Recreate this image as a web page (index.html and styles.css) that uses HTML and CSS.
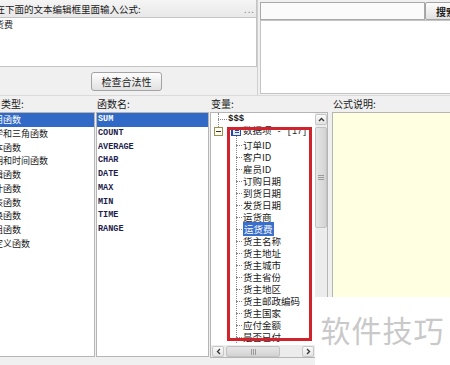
FILE: index.html
```html
<!DOCTYPE html>
<html lang="zh-CN">
<head>
    <meta charset="UTF-8">
    <title>公式编辑器</title>
    <link rel="stylesheet" href="styles.css">
</head>
<body>
    <!-- formula input + search -->
    <div class="top">
        <div class="editor">
            <div class="editor-head">
                <span class="editor-title">请在下面的文本编辑框里面输入公式:</span>
                <span class="more">...</span>
            </div>
            <div class="editor-text">运货费</div>
            <div class="editor-foot">
                <button class="btn btn-check">检查合法性</button>
            </div>
        </div>
        <div class="search">
            <div class="search-bar">
                <input class="search-input" type="text">
                <button class="btn search-btn">搜索</button>
            </div>
            <div class="search-result"></div>
        </div>
    </div>

    <!-- function picker -->
    <div class="bottom">
        <div class="col col-type">
            <div class="col-label">类型:</div>
            <ul class="list type-list">
                <li class="sel">常用函数</li>
                <li>数学和三角函数</li>
                <li>文本函数</li>
                <li>日期和时间函数</li>
                <li>逻辑函数</li>
                <li>统计函数</li>
                <li>报表函数</li>
                <li>转换函数</li>
                <li>数组函数</li>
                <li>自定义函数</li>
            </ul>
        </div>

        <div class="col col-func">
            <div class="col-label">函数名:</div>
            <ul class="list func-list">
                <li class="sel">SUM</li>
                <li>COUNT</li>
                <li>AVERAGE</li>
                <li>CHAR</li>
                <li>DATE</li>
                <li>MAX</li>
                <li>MIN</li>
                <li>TIME</li>
                <li>RANGE</li>
            </ul>
        </div>

        <div class="col col-var">
            <div class="col-label">变量:</div>
            <div class="tree-box">
                <div class="tree">
                    <div class="node leaf-top">$$$</div>
                    <div class="node group">
                        <svg class="toggle" width="9" height="9" viewBox="0 0 9 9"><rect x=".5" y=".5" width="8" height="8" fill="#fffdf0" stroke="#9c8f4f"/><path d="M2 4.5h5" stroke="#333"/></svg>
                        <svg class="node-icon" width="10" height="9" viewBox="0 0 10 9"><rect x=".5" y=".5" width="9" height="8" fill="#e4ebfb" stroke="#2b49a8"/><path d="M1 1v7" stroke="#2b49a8" stroke-width="2"/><path d="M4 3.5h4M4 5.5h4" stroke="#2b49a8"/></svg>
                        <span class="group-name">数据项<span class="mono"> - [17]</span></span>
                    </div>
                    <ul class="children">
                        <li>订单ID</li>
                        <li>客户ID</li>
                        <li>雇员ID</li>
                        <li>订购日期</li>
                        <li>到货日期</li>
                        <li>发货日期</li>
                        <li>运货商</li>
                        <li class="sel"><span>运货费</span></li>
                        <li>货主名称</li>
                        <li>货主地址</li>
                        <li>货主城市</li>
                        <li>货主省份</li>
                        <li>货主地区</li>
                        <li>货主邮政编码</li>
                        <li>货主国家</li>
                        <li>应付金额</li>
                        <li>是否已付</li>
                    </ul>
                </div>
                <div class="vscroll">
                    <div class="sb-btn">
                        <svg width="7" height="5" viewBox="0 0 7 5"><path d="M1 4L3.5 1.5L6 4" fill="none" stroke="#3a3a3a" stroke-width="1.4"/></svg>
                    </div>
                    <div class="vthumb">
                        <svg width="6" height="5" viewBox="0 0 6 5"><path d="M0 .5h6M0 2.5h6M0 4.5h6" stroke="#9a9a9a"/></svg>
                    </div>
                </div>
                <div class="hscroll">
                    <div class="sb-btn">
                        <svg width="5" height="7" viewBox="0 0 5 7"><path d="M4 1L1.5 3.5L4 6" fill="none" stroke="#3a3a3a" stroke-width="1.4"/></svg>
                    </div>
                    <div class="hthumb">
                        <svg width="5" height="6" viewBox="0 0 5 6"><path d="M.5 0v6M2.5 0v6M4.5 0v6" stroke="#9a9a9a"/></svg>
                    </div>
                    <div class="track"></div>
                    <div class="sb-btn">
                        <svg width="5" height="7" viewBox="0 0 5 7"><path d="M1 1L3.5 3.5L1 6" fill="none" stroke="#3a3a3a" stroke-width="1.4"/></svg>
                    </div>
                </div>
                <div class="corner"></div>
            </div>
        </div>

        <div class="col col-desc">
            <div class="col-label">公式说明:</div>
            <div class="desc-box"></div>
        </div>
    </div>

    <div class="mark"></div>
    <div class="watermark">软件技巧</div>
</body>
</html>
```

FILE: styles.css
```css
* {
    box-sizing: border-box;
}

body {
    margin: 0;
    width: 450px;
    height: 365px;
    overflow: hidden;
    position: relative;
    background-color: #f0f0f0;
    font-family: "Noto Sans CJK SC", sans-serif;
    font-size: 10px;
    color: #1a1a1a;
}

/* top area */
.top {
    display: flex;
    height: 96px;
    border-bottom: 1px solid #dadada;
}

.editor {
    width: 269px;
    margin-left: -12px;
    flex-shrink: 0;
    display: flex;
    flex-direction: column;
}

.editor-head {
    height: 18px;
    display: flex;
    align-items: center;
    justify-content: space-between;
    padding: 0 1px 0 0;
    background: linear-gradient(#f5f5f5, #e8e8e8);
    border: 1px solid #c4c4c4;
    border-top: none;
    font-size: 9.5px;
    white-space: nowrap;
}

.editor-title {
    margin-left: -3px;
}

.more {
    color: #777;
    letter-spacing: 1px;
}

.editor-text {
    height: 49px;
    background: #fff;
    border: 1px solid #c4c4c4;
    border-top: none;
    font-size: 9px;
    line-height: 12px;
    padding-top: 1px;
    text-indent: -3px;
}

.editor-foot {
    flex: 1;
    display: flex;
    justify-content: center;
    align-items: flex-start;
    padding: 5px 0 0 8px;
}

.btn {
    margin: 0;
    border: 1px solid #a3a3a3;
    border-radius: 3px;
    background: linear-gradient(#fdfdfd, #e1e1e1);
    font-family: "Noto Sans CJK SC", sans-serif;
    font-size: 10px;
    color: #222;
    padding: 0;
}

.btn-check {
    width: 71px;
    height: 19px;
}

.search {
    flex: 1;
    display: flex;
    flex-direction: column;
    padding-left: 2px;
    border-left: 1px solid #cfcfcf;
}

.search-bar {
    display: flex;
    height: 20px;
    padding-top: 2px;
}

.search-input {
    width: 165px;
    height: 18px;
    margin: 0;
    padding: 0;
    border: 1px solid #a9a9a9;
    background: #fbfbfb;
}

.search-btn {
    width: 50px;
    height: 18px;
    flex-shrink: 0;
    font-weight: bold;
    text-align: left;
    padding-left: 10px;
    border-radius: 2px;
}

.search-result {
    flex: 1;
    background: #fff;
    border: 1px solid #c4c4c4;
    margin-bottom: 1px;
}

/* bottom area */
.bottom {
    display: flex;
}

.col {
    display: flex;
    flex-direction: column;
    flex-shrink: 0;
}

.col-label {
    height: 16px;
    line-height: 16px;
    font-size: 10px;
    padding-left: 1px;
    white-space: nowrap;
}

.col-type {
    width: 95px;
    margin-right: 1px;
}

.col-func {
    width: 113px;
    margin-right: 1px;
}

.col-var {
    width: 118px;
    margin-right: 4px;
}

.col-desc {
    flex: 1;
    min-width: 0;
}

.list {
    margin: 0;
    padding: 0;
    list-style: none;
    height: 245px;
    background: #fff;
    border: 1px solid #b5b5b5;
    overflow: hidden;
}

.list li {
    height: 13.75px;
    line-height: 13.75px;
    white-space: nowrap;
}

.list li.sel {
    background: #3169c6;
    color: #fff;
}

.type-list {
    margin-left: -16px;
    font-size: 9px;
}

.func-list li {
    padding-left: 1px;
    font-family: "Liberation Mono", monospace;
    font-weight: bold;
    font-size: 8.5px;
    color: #1d1d4f;
}

.func-list li.sel {
    color: #fff;
}

/* variable tree */
.tree-box {
    height: 246px;
    background: #fff;
    border: 1px solid #b5b5b5;
    display: grid;
    grid-template-columns: 1fr 12px;
    grid-template-rows: 1fr 12px;
}

.tree {
    overflow: hidden;
    font-size: 9.5px;
}

.node {
    position: relative;
    height: 12px;
    line-height: 12px;
    white-space: nowrap;
}

.leaf-top {
    padding-left: 17px;
    font-family: "Liberation Mono", monospace;
    font-weight: bold;
    font-size: 9px;
}

.leaf-top::before {
    content: "";
    position: absolute;
    left: 7px;
    top: 0;
    height: 14px;
    border-left: 1px dotted #888;
}

.leaf-top::after {
    content: "";
    position: absolute;
    left: 7px;
    top: 6px;
    width: 9px;
    border-top: 1px dotted #888;
}

.group {
    display: flex;
    align-items: center;
}

.toggle {
    margin-left: 3px;
    flex-shrink: 0;
}

.node-icon {
    margin-left: 8px;
    flex-shrink: 0;
}

.group-name {
    margin-left: 2px;
}

.mono {
    font-family: "Liberation Mono", monospace;
    font-size: 8.5px;
}

.children {
    list-style: none;
    margin: 2px 0 0;
    padding: 0;
    position: relative;
}

.children::before {
    content: "";
    position: absolute;
    left: 25px;
    top: -3px;
    bottom: 0;
    border-left: 1px dotted #888;
}

.children li {
    position: relative;
    height: 12px;
    line-height: 12px;
    padding-left: 32px;
    white-space: nowrap;
}

.children li::before {
    content: "";
    position: absolute;
    left: 25px;
    top: 6px;
    width: 6px;
    border-top: 1px dotted #888;
}

.children li.sel span {
    background: #3a70cc;
    color: #fff;
    padding: 0 1px;
}

/* scrollbars */
.vscroll {
    background: #ececec;
    display: flex;
    flex-direction: column;
    padding: 1px 0;
}

.sb-btn {
    height: 11px;
    flex-shrink: 0;
    display: flex;
    align-items: center;
    justify-content: center;
    background: linear-gradient(#fafafa, #e4e4e4);
    border: 1px solid #c6c6c6;
    border-radius: 2px;
}

.vthumb {
    height: 101px;
    margin-top: 2px;
    background: linear-gradient(90deg, #e6e6e6, #d3d3d3);
    border: 1px solid #c2c2c2;
    border-radius: 2px;
    display: flex;
    align-items: center;
    justify-content: center;
}

.hscroll {
    display: flex;
    background: #ececec;
    padding: 0 1px;
}

.hscroll .sb-btn {
    width: 12px;
    height: 11px;
    margin-top: 1px;
}

.hthumb {
    width: 54px;
    height: 11px;
    margin: 1px 0 0 2px;
    background: linear-gradient(#e6e6e6, #d3d3d3);
    border: 1px solid #c2c2c2;
    border-radius: 2px;
    display: flex;
    align-items: center;
    justify-content: center;
}

.track {
    flex: 1;
}

.corner {
    background: #ececec;
}

.desc-box {
    height: 260px;
    background: #ffffe1;
    border: 1px solid #b5b5b5;
    border-right: none;
}

/* overlays */
.mark {
    position: absolute;
    left: 227px;
    top: 127px;
    width: 85px;
    height: 214px;
    border: 3px solid #d0232b;
}

.watermark {
    position: absolute;
    left: 315px;
    top: 297px;
    width: 135px;
    height: 68px;
    padding-bottom: 4px;
    background: #fff;
    color: #c9c9c9;
    font-size: 30px;
    letter-spacing: 1px;
    display: flex;
    align-items: center;
    justify-content: center;
}
```
